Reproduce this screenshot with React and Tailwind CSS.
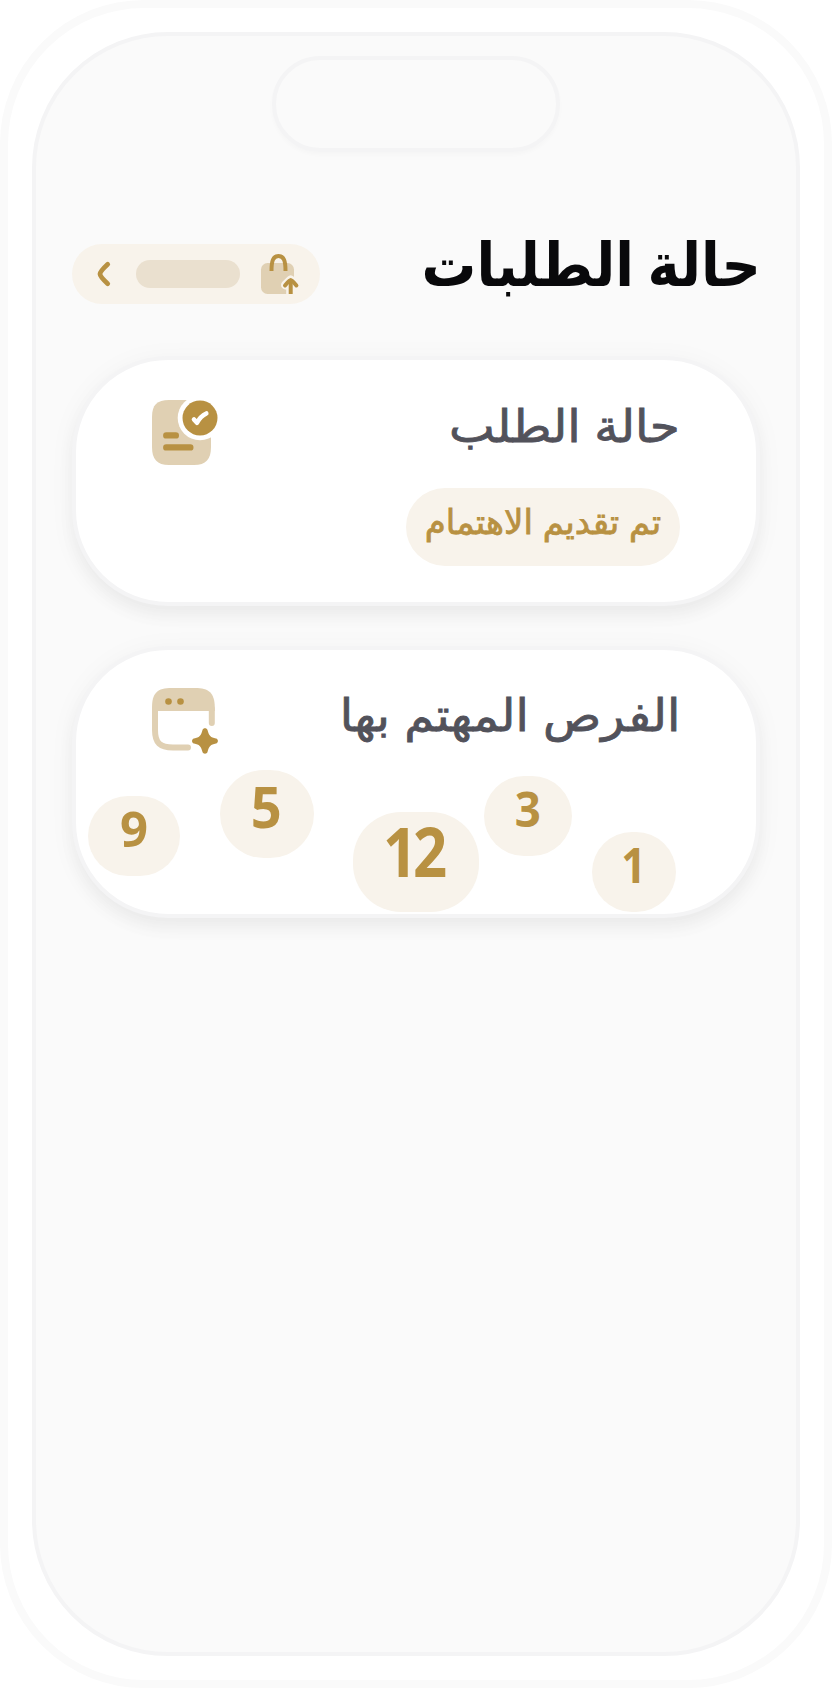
const numbers = [
  { n: '1', box: 'w-[84px] h-[80px] mt-[62px] mr-[80px] rounded-[40px]', text: 'text-[48px] leading-[65px] scale-x-90' },
  { n: '3', box: 'w-[88px] h-[80px] mt-[6px] mr-[20px] rounded-[40px]', text: 'text-[48px] leading-[65px] scale-x-95' },
  { n: '12', box: 'w-[126px] h-[100px] mt-[42px] mr-[5px] rounded-[48px]', text: 'text-[68px] leading-[77px] tracking-[-5px] scale-x-[0.88] -translate-x-[3px]' },
  { n: '5', box: 'w-[94px] h-[88px] mt-0 mr-[39px] rounded-[44px]', text: 'text-[57px] leading-[72px] scale-x-95 -translate-x-px' },
  { n: '9', box: 'w-[92px] h-[80px] mt-[26px] mr-[40px] rounded-[40px]', text: 'text-[49px] leading-[64px]' },
]

function BagIcon() {
  return (
    <svg viewBox="0 0 40 44" className="h-[44px] w-[40px] overflow-visible" fill="none">
      <rect x="1" y="11" width="33" height="31" rx="6.500" fill="#e0d0b3" />
      <path d="M11.500 19C11.500 9 13 4 18.500 4S25.500 9 25.500 19" stroke="#b89142" strokeWidth="4" />
      <path d="M30.700 42V29M25.500 33l5.200-5 5.200 5" stroke="#f8f3eb" strokeWidth="9" strokeLinecap="round" strokeLinejoin="round" />
      <path d="M30.700 42V29" stroke="#b89142" strokeWidth="4" />
      <path d="M25 33.500Q29.500 28 30.700 28T36.400 33.500" stroke="#b89142" strokeWidth="4" strokeLinecap="round" />
    </svg>
  )
}

function RequestIcon() {
  return (
    <svg viewBox="0 0 68 68" className="h-[68px] w-[68px] overflow-visible" fill="none">
      <path d="M17 3H42C54 3 59 8 59 20V50C59 62 54 68 42 68H17C5 68 0 62 0 50V20C0 8 5 3 17 3Z" fill="#e0d0b3" />
      <circle cx="48" cy="21" r="22.300" fill="#fff" />
      <circle cx="48" cy="21" r="17.500" fill="#b89142" />
      <path d="M42 22.500l3 3.300C47 22 50 18.500 54.300 16.500" stroke="#fff" strokeWidth="4.600" strokeLinecap="round" strokeLinejoin="round" />
      <path d="M14.300 38.400h9.500M14.300 50.400h24" stroke="#b89142" strokeWidth="6.400" strokeLinecap="round" />
    </svg>
  )
}

function OpportunityIcon() {
  return (
    <svg viewBox="0 0 68 68" className="h-[68px] w-[68px] overflow-visible" fill="none">
      <path d="M3 24V45C3 58 8 62.500 21 62.500L36 62.600M59.800 24V38" stroke="#e0d0b3" strokeWidth="6" strokeLinecap="round" />
      <path d="M0 26V23C0 8 5 3 20 3H43C57 3 62.500 8 62.800 22V26Z" fill="#e0d0b3" />
      <circle cx="16.500" cy="16.500" r="3.300" fill="#b89142" />
      <circle cx="28.500" cy="16.500" r="3.300" fill="#b89142" />
      <path d="M50.500 45c.6-2.300 4.400-2.300 5 0 1.600 6 3 7.400 8.500 8.500 2.600.6 2.600 4.400 0 5-5.500 1.100-6.900 2.500-8.500 8.500-.6 2.300-4.400 2.300-5 0-1.600-6-3-7.400-8.500-8.500-2.600-.6-2.600-4.400 0-5 5.500-1.100 6.900-2.500 8.500-8.500Z" fill="#b89142" />
    </svg>
  )
}

function Card({ className, children }) {
  return (
    <section className={`rounded-[96px] border-4 border-[#f4f4f5] bg-white shadow-[0_10px_16px_0_rgba(0,0,0,0.04),0_4px_28px_0_rgba(0,0,0,0.04)] ${className}`}>
      {children}
    </section>
  )
}

export default function App() {
  return (
    <div dir="rtl" className="h-[1688px] w-[832px] bg-white font-['DejaVu_Sans',sans-serif]">
      <div className="h-full rounded-[144px] border-8 border-[#fafafa] bg-white p-6">
        <div className="flex h-full flex-col rounded-[136px] border-4 border-[#f4f4f5] bg-[#fafafa] px-9 pt-5">
          <div className="h-24 w-72 shrink-0 self-center rounded-full border-4 border-[#f4f4f5] shadow-[0_3px_4px_rgba(0,0,0,0.02)]" />

          <header className="mt-[72px] flex h-[100px] items-start justify-between">
            <h1 className="-mr-px origin-right scale-x-[0.91] whitespace-nowrap text-[60px] font-bold leading-[82px] text-[#09090b] [word-spacing:-6px]">حالة الطلبات</h1>
            <div className="mt-5 flex h-[60px] w-[248px] shrink-0 items-center rounded-full bg-[#f8f3eb] pr-[20px]">
              <BagIcon />
              <div className="mr-5 h-7 w-[104px] rounded-full bg-[#eae0cf]" />
              <svg viewBox="0 0 12 24" className="mr-[26px] h-6 w-3 overflow-visible" fill="none">
                <path d="M9.700 2.300Q2 9.500 2 12T9.700 21.700" stroke="#b89142" strokeWidth="4.800" strokeLinecap="round" />
              </svg>
            </div>
          </header>

          <Card className="mt-8 h-[250px] px-[76px]">
            <div className="flex items-start justify-between pt-[37px]">
              <h2 className="origin-right scale-x-[1.08] whitespace-nowrap text-[45px] leading-[60px] text-[#52525b] [-webkit-text-stroke:0.8px_#52525b] [word-spacing:-2px]">حالة الطلب</h2>
              <RequestIcon />
            </div>
            <div className="mt-[23px] flex h-[78px] w-[274px] items-start justify-center rounded-full bg-[#f8f3eb]">
              <span className="whitespace-nowrap text-[34px] leading-[68px] text-[#b89142] [-webkit-text-stroke:0.8px_#b89142] [word-spacing:-1px]">تم تقديم الاهتمام</span>
            </div>
          </Card>

          <Card className="mt-10 h-[272px]">
            <div className="flex items-start justify-between px-[76px] pt-[35px]">
              <h2 className="origin-right scale-x-[1.07] whitespace-nowrap text-[45px] leading-[62px] text-[#52525b] [-webkit-text-stroke:0.8px_#52525b] [word-spacing:-1px]">الفرص المهتم بها</h2>
              <OpportunityIcon />
            </div>
            <div className="mt-[17px] flex items-start font-['Noto_Sans',sans-serif]">
              {numbers.map(({ n, box, text }) => (
                <div key={n} className={`flex shrink-0 justify-center bg-[#f8f3eb] font-bold text-[#b89142] ${box}`}>
                  <span className={text}>{n}</span>
                </div>
              ))}
            </div>
          </Card>
        </div>
      </div>
    </div>
  )
}
